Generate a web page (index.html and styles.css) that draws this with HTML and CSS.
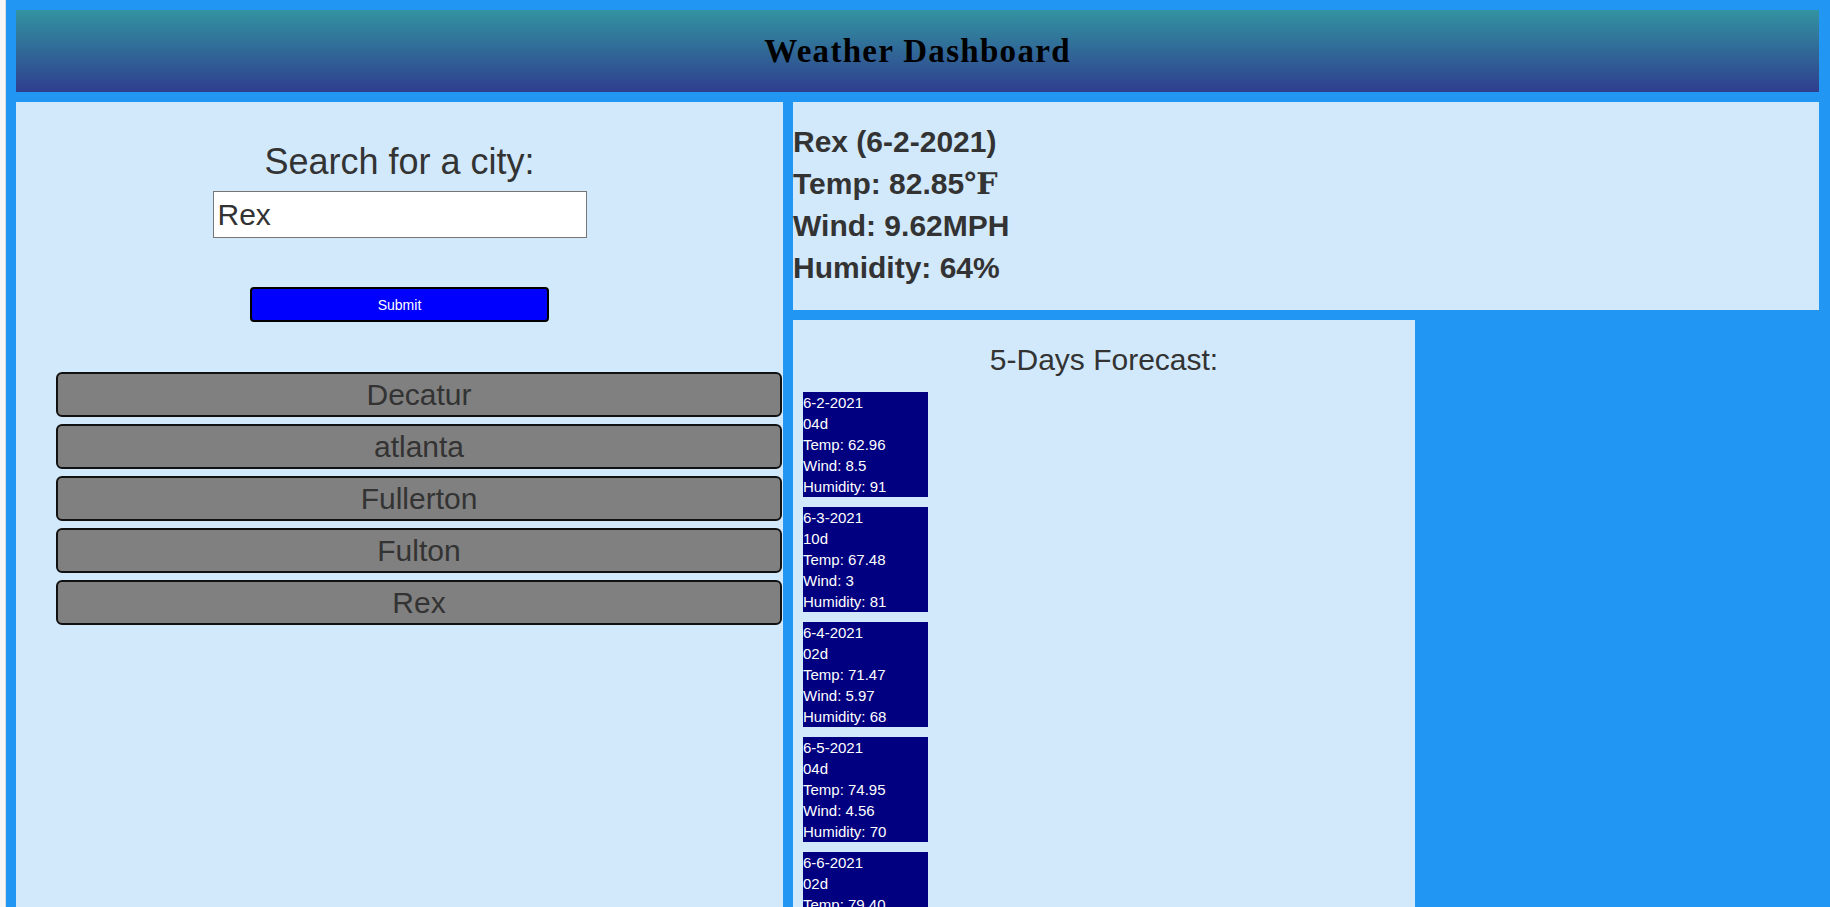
FILE: index.html
```html
<!DOCTYPE html>
<html lang="en">
<head>
<meta charset="utf-8">
<title>Weather Dashboard</title>
<link rel="stylesheet" href="styles.css">
</head>
<body>
<div class="page">
  <header class="top-bar">
    <h1 class="top-title">Weather Dashboard</h1>
  </header>
  <main class="layout">
    <section class="search-panel">
      <h2 class="search-title">Search for a city:</h2>
      <input class="city-input" type="text" value="Rex">
      <button class="submit-btn" type="button">Submit</button>
      <ul class="history">
        <li><button class="city-btn" type="button">Decatur</button></li>
        <li><button class="city-btn" type="button">atlanta</button></li>
        <li><button class="city-btn" type="button">Fullerton</button></li>
        <li><button class="city-btn" type="button">Fulton</button></li>
        <li><button class="city-btn" type="button">Rex</button></li>
      </ul>
    </section>
    <div class="right-col">
      <section class="current">
        <div class="current-line">Rex (6-2-2021)</div>
        <div class="current-line">Temp: 82.85<span class="deg">℉</span></div>
        <div class="current-line">Wind: 9.62MPH</div>
        <div class="current-line">Humidity: 64%</div>
      </section>
      <section class="forecast">
        <h3 class="forecast-title">5-Days Forecast:</h3>
        <div class="cards">
          <div class="card">
            <div>6-2-2021</div><div>04d</div><div>Temp: 62.96</div><div>Wind: 8.5</div><div>Humidity: 91</div>
          </div>
          <div class="card">
            <div>6-3-2021</div><div>10d</div><div>Temp: 67.48</div><div>Wind: 3</div><div>Humidity: 81</div>
          </div>
          <div class="card">
            <div>6-4-2021</div><div>02d</div><div>Temp: 71.47</div><div>Wind: 5.97</div><div>Humidity: 68</div>
          </div>
          <div class="card">
            <div>6-5-2021</div><div>04d</div><div>Temp: 74.95</div><div>Wind: 4.56</div><div>Humidity: 70</div>
          </div>
          <div class="card">
            <div>6-6-2021</div><div>02d</div><div>Temp: 79.40</div><div>Wind: 3.2</div><div>Humidity: 66</div>
          </div>
        </div>
      </section>
    </div>
  </main>
</div>
</body>
</html>
```

FILE: styles.css
```css
html, body {
  margin: 0;
  padding: 0;
}

body {
  background: #f7f7f7;
  font-family: "Liberation Sans", Arial, sans-serif;
  color: #333333;
}

.page {
  margin-left: 6px;
  background: #2196f3;
  padding: 10px 11px 10px 10px;
  box-shadow: -1px 0 0 #dedede;
}

.top-bar {
  height: 82px;
  background: linear-gradient(to bottom, #3293a1, #2f3e8e);
  display: flex;
  align-items: center;
  justify-content: center;
}

.top-title {
  margin: 0;
  font-family: "Liberation Serif", "Times New Roman", serif;
  font-weight: bold;
  font-size: 33px;
  letter-spacing: 1.3px;
  color: #000000;
  line-height: 1;
}

.layout {
  display: grid;
  grid-template-columns: 767px 1fr;
  column-gap: 10px;
  margin-top: 10px;
}

.search-panel {
  background: #d2e9fc;
  display: flex;
  flex-direction: column;
  align-items: center;
  padding-bottom: 40px;
}

.search-title {
  margin: 39px 0 9px;
  font-size: 36px;
  line-height: 41px;
  font-weight: normal;
  color: #333333;
}

.city-input {
  box-sizing: border-box;
  width: 374px;
  height: 47px;
  margin: 0;
  padding: 0 4px;
  border: 1px solid #767676;
  background: #ffffff;
  font-family: "Liberation Sans", Arial, sans-serif;
  font-size: 30px;
  color: #333333;
}

.submit-btn {
  box-sizing: border-box;
  width: 299px;
  height: 35px;
  margin-top: 49px;
  border: 2px solid #000000;
  border-radius: 4px;
  background: #0000ff;
  color: #ffffff;
  font-family: "Liberation Sans", Arial, sans-serif;
  font-size: 14px;
  padding: 0;
}

.history {
  list-style: none;
  align-self: stretch;
  margin: 50px 0 0;
  padding: 0 1px 0 40px;
  display: flex;
  flex-direction: column;
  gap: 7px;
}

.city-btn {
  box-sizing: border-box;
  display: block;
  width: 100%;
  height: 45px;
  margin: 0;
  padding: 0;
  border: 2px solid #111111;
  border-radius: 6px;
  background: #808080;
  color: #333333;
  font-family: "Liberation Sans", Arial, sans-serif;
  font-size: 30px;
  line-height: 1;
}

.right-col {
  display: flex;
  flex-direction: column;
  align-items: flex-start;
  gap: 10px;
}

.current {
  align-self: stretch;
  background: #d2e9fc;
  padding: 19px 0 21px;
}

.current-line {
  font-size: 30px;
  font-weight: bold;
  line-height: 42px;
  color: #333333;
}

.deg {
  font-family: "Liberation Serif", "DejaVu Serif", serif;
}

.forecast {
  width: 622px;
  background: #d2e9fc;
  padding-bottom: 20px;
}

.forecast-title {
  margin: 23px 0 15px;
  text-align: center;
  font-size: 30px;
  line-height: 34px;
  font-weight: normal;
  color: #333333;
}

.cards {
  display: flex;
  flex-direction: column;
  gap: 10px;
  padding-left: 10px;
}

.card {
  width: 125px;
  height: 105px;
  background: #000080;
  color: #ffffff;
  font-size: 15px;
  line-height: 21px;
}
```
